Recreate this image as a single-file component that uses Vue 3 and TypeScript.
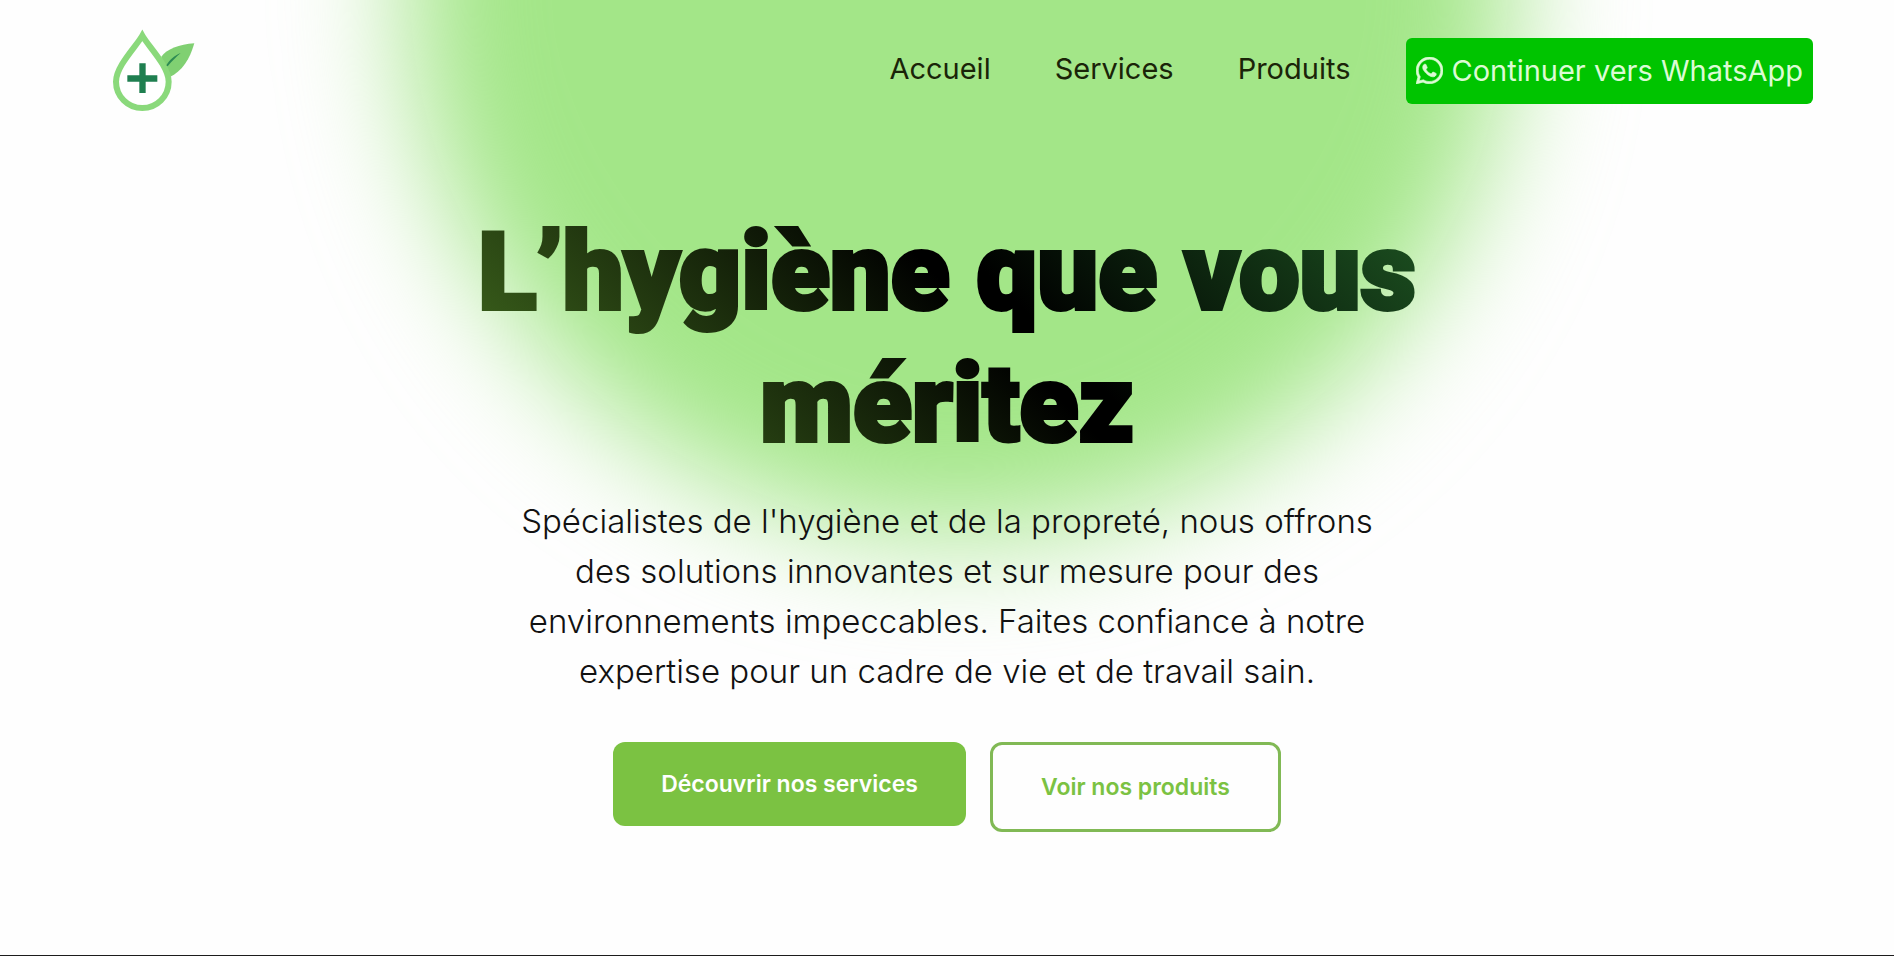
<script setup lang="ts">
interface NavLink {
  label: string
  href: string
}

const links: NavLink[] = [
  { label: 'Accueil', href: '#accueil' },
  { label: 'Services', href: '#services' },
  { label: 'Produits', href: '#produits' },
]
</script>

<template>
  <div class="page">
    <div class="hero-area">
      <div class="glow" aria-hidden="true"></div>

      <header class="header">
        <a class="logo" href="#accueil" aria-label="Accueil">
          <svg viewBox="69 58 243 243" aria-hidden="true">
            <path
              d="M313 98C268 101 229 116 214 138L221 180L238 200C277 182 300 144 313 98Z"
              fill="#80d072"
            />
            <path
              d="M157 75C140 106 78 166 78 213A79 79 0 0 0 236 213C236 166 174 106 157 75Z"
              fill="#fff"
              stroke="#8ad97b"
              stroke-width="18"
            />
            <path d="M148 158h19v36h35v19h-35v34h-19v-34h-36v-19h36z" fill="#1f7f50" />
            <path d="M229 164C240 146 253 135 272 127C258 139 246 151 233 167Z" fill="#2c8a53" />
          </svg>
        </a>

        <nav class="nav">
          <a v-for="link in links" :key="link.href" class="nav-link" :href="link.href">{{ link.label }}</a>
        </nav>

        <button class="whatsapp" type="button">
          <svg class="whatsapp-icon" viewBox="0 32 448 448" aria-hidden="true">
            <path
              fill="currentColor"
              d="M380.9 97.1C339 55.1 283.2 32 223.9 32c-122.4 0-222 99.6-222 222 0 39.1 10.2 77.3 29.6 111L0 480l117.7-30.9c32.4 17.7 68.9 27 106.1 27h.1c122.3 0 224.1-99.6 224.1-222 0-59.3-25.2-115-67.1-157zm-157 341.6c-33.2 0-65.7-8.9-94-25.7l-6.7-4-69.8 18.3L72 359.2l-4.4-7c-18.5-29.4-28.2-63.3-28.2-98.2 0-101.7 82.8-184.5 184.6-184.5 49.3 0 95.6 19.2 130.4 54.1 34.8 34.9 56.2 81.2 56.1 130.5 0 101.8-84.9 184.6-186.6 184.6zm101.2-138.2c-5.5-2.8-32.8-16.2-37.9-18-5.1-1.9-8.8-2.8-12.5 2.8-3.7 5.6-14.3 18-17.6 21.8-3.2 3.7-6.5 4.2-12 1.4-32.6-16.3-54-29.1-75.5-66-5.7-9.8 5.7-9.1 16.3-30.3 1.8-3.7.9-6.9-.5-9.7-1.4-2.8-12.5-30.1-17.1-41.2-4.5-10.8-9.1-9.3-12.5-9.5-3.2-.2-6.9-.2-10.6-.2-3.7 0-9.7 1.4-14.8 6.9-5.1 5.6-19.4 19-19.4 46.3 0 27.3 19.9 53.7 22.6 57.4 2.8 3.7 39.1 59.7 94.8 83.8 35.2 15.2 49 16.5 66.6 13.9 10.7-1.6 32.8-13.4 37.4-26.4 4.6-13 4.6-24.1 3.2-26.4-1.3-2.5-5-3.9-10.5-6.6z"
              stroke="currentColor"
              stroke-width="10"
            />
          </svg>
          <span>Continuer vers WhatsApp</span>
        </button>
      </header>

      <main class="hero">
        <h1 class="title">L’hygiène que vous méritez</h1>
        <p class="lead">
          Spécialistes de l'hygiène et de la propreté, nous offrons des solutions innovantes et sur mesure pour des
          environnements impeccables. Faites confiance à notre expertise pour un cadre de vie et de travail sain.
        </p>
        <div class="actions">
          <a class="action primary" href="#services">Découvrir nos services</a>
          <a class="action outline" href="#produits">Voir nos produits</a>
        </div>
      </main>
    </div>
  </div>
</template>

<style>
body {
  margin: 0;
  background: #fefefe;
}
</style>

<style scoped>
.page {
  box-sizing: border-box;
  min-height: 100vh;
  display: flex;
  flex-direction: column;
  border-bottom: 1px solid #1c1c1c;
  font-family: Inter, "Liberation Sans", sans-serif;
  color: #111;
}

.hero-area {
  position: relative;
  flex: 1;
  overflow: hidden;
}

.glow {
  position: absolute;
  top: -570px;
  left: calc(50% + 12px);
  width: 1104px;
  height: 1104px;
  border-radius: 50%;
  background: #a3e688;
  filter: blur(60px);
  transform: translateX(-50%);
}

.header {
  position: relative;
  display: flex;
  align-items: center;
  padding: 30px 81px 30px 113px;
}

.logo {
  display: block;
  width: 81px;
  height: 81px;
  margin-right: auto;
}

.logo svg {
  display: block;
  width: 100%;
  height: 100%;
  overflow: visible;
}

.nav {
  display: flex;
  gap: 64px;
  margin-right: 56px;
}

.nav-link {
  padding-bottom: 4px;
  font-size: 29px;
  font-weight: 400;
  line-height: 40px;
  color: #1a2408;
  text-decoration: none;
}

.whatsapp {
  display: flex;
  align-items: center;
  gap: 8px;
  height: 66px;
  padding: 0 10px;
  border: 0;
  border-radius: 6px;
  background: #00c400;
  color: #dcfbd4;
  font-family: inherit;
  font-size: 29px;
  font-weight: 400;
  cursor: pointer;
}

.whatsapp-icon {
  width: 27px;
  height: 27px;
}

.hero {
  position: relative;
  display: flex;
  flex-direction: column;
  align-items: center;
  padding: 65px 24px 120px;
  text-align: center;
}

.title {
  max-width: 1040px;
  margin: 0;
  font-family: Roboto, "Liberation Sans", sans-serif;
  font-size: 108px;
  font-weight: 900;
  line-height: 132px;
  color: transparent;
  -webkit-text-stroke: 4px transparent;
  background: linear-gradient(45deg, #4d7f24 0%, #000 54%, #000 58%, #1a4a1e 92%);
  -webkit-background-clip: text;
  background-clip: text;
}

.lead {
  max-width: 880px;
  margin: 26px 0 46px;
  font-size: 33px;
  font-weight: 300;
  line-height: 50px;
}

.actions {
  display: flex;
  align-items: flex-start;
  gap: 24px;
}

.action {
  padding: 24px 48px;
  border-radius: 12px;
  font-size: 23px;
  font-weight: 600;
  line-height: 36px;
  text-decoration: none;
}

.primary {
  background: #7bc242;
  color: #fff;
}

.outline {
  border: 3px solid #81b955;
  color: #7bc242;
}
</style>
